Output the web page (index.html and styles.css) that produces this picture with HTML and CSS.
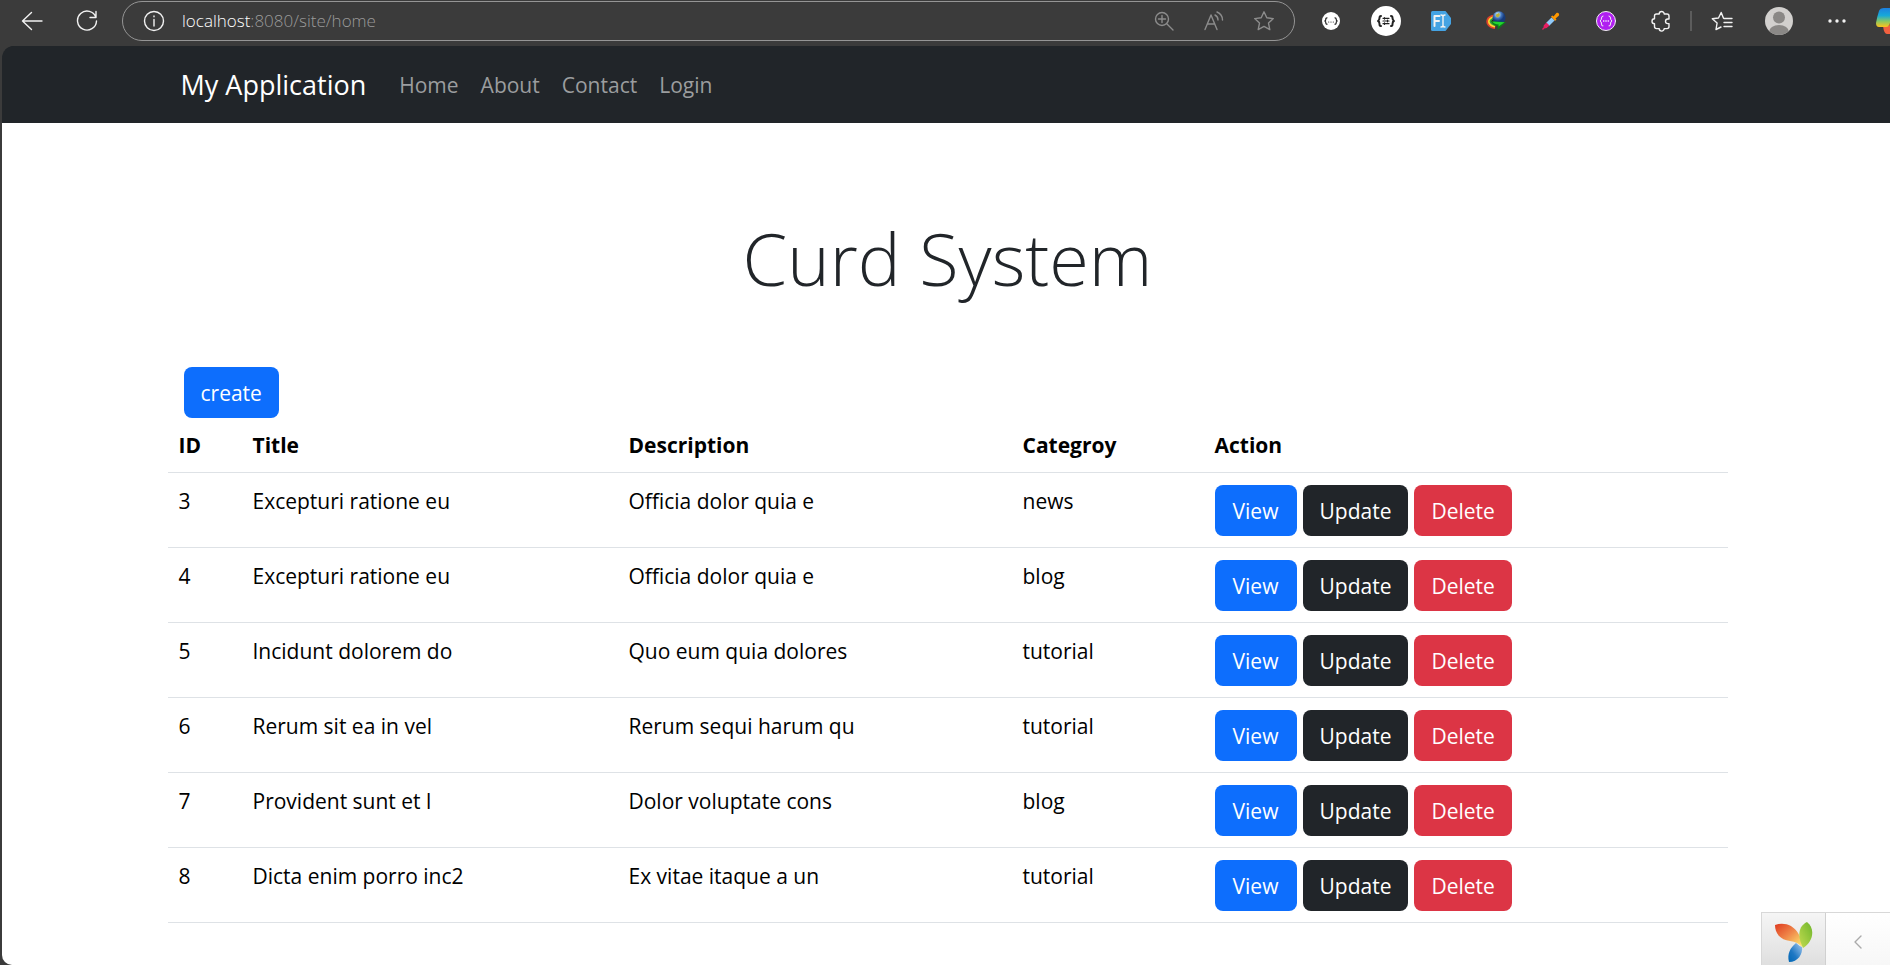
FILE: index.html
```html
<!DOCTYPE html>
<html lang="en">
<head>
<meta charset="utf-8">
<meta name="viewport" content="width=device-width, initial-scale=1">
<title>My Application</title>
<link rel="stylesheet" href="styles.css">
</head>
<body>
<header class="toolbar">
  <button class="tool" aria-label="Back"><svg width="22" height="20" viewBox="0 0 22 20"><path d="M21 10H1.500M10.500 1.500 1.500 10l9 8.500"/></svg></button>
  <button class="tool" aria-label="Refresh"><svg width="22" height="22" viewBox="0 0 22 22"><path d="M20 7.500A9.500 9.500 0 1 0 20.500 11M20 1.500v6h-6"/></svg></button>
  <div class="address">
    <button class="site-info" aria-label="Site information"><svg width="22" height="22" viewBox="0 0 22 22"><circle cx="11" cy="11" r="9.500"/><path d="M11 9.500v6.500M11 6v.8"/></svg></button>
    <div class="url" role="textbox" aria-label="Address"><span class="host">localhost</span>:8080/site/home</div>
    <button class="pill-tool" aria-label="Zoom"><svg width="20" height="20" viewBox="0 0 20 20"><circle cx="8" cy="8" r="6.500"/><path d="M13 13l6 6M8 4.500v7M4.500 8h7"/></svg></button>
    <button class="pill-tool" aria-label="Read aloud"><svg width="20" height="20" viewBox="0 0 20 20"><path d="M1 18.500 7 4 13 18.500M3.300 13h7.500M11 4c2 1 3 2.500 3 5M13 1c3.500 1.500 5.500 4 5.500 8"/></svg></button>
    <button class="pill-tool" aria-label="Add to favorites"><svg width="22" height="22" viewBox="0 0 22 22"><path d="M11 1.800l2.800 6 6.500.8-4.800 4.500 1.300 6.500L11 16.400l-5.800 3.200 1.300-6.500L1.700 8.600l6.500-.8z"/></svg></button>
  </div>
  <button class="tool" aria-label="JSON viewer"><svg width="20" height="20" viewBox="0 0 20 20"><circle class="white" cx="10" cy="10" r="9"/><path class="ink" d="M6 6.800Q4.800 6.800 4.800 8.200T3.800 10Q4.800 10.300 4.800 11.800t1.200 1.400M14 6.800q1.200 0 1.200 1.400t1 1.800q-1 .3-1 1.800T14 13.200"/><g class="dots"><circle cx="7.700" cy="11" r=".6"/><circle cx="10" cy="11" r=".6"/><circle cx="12.300" cy="11" r=".6"/></g></svg></button>
  <button class="tool" aria-label="JSON formatter"><svg width="30" height="30" viewBox="0 0 30 30"><circle class="white" cx="15" cy="15" r="15"/><path class="ink bold" d="M10 10Q8.500 10 8.500 12T7 15q1.500.500 1.500 3t1.500 2M20 10q1.500 0 1.500 2T23 15q-1.500.500-1.500 3T20 20"/><path class="ink" d="M12 12.300h6M12 15h6M12 17.700h6M13.500 11.500v1.600M16.500 14.200v1.600M13.500 16.900v1.600"/></svg></button>
  <button class="tool" aria-label="Form filler"><svg width="20" height="20" viewBox="0 0 20 20"><path fill="#45a3e3" stroke="none" d="M1.500 0h13L20 7v6l-5.500 7h-13Q0 20 0 18.500v-17Q0 0 1.500 0z"/><path class="thick" d="M3.500 15V5H8.500M3.500 10h4.500"/><path d="M10 4q2 0 2 1.500Q12 4 14 4M12 5.500v9M10 16q2 0 2-1.500 0 1.500 2 1.500"/></svg></button>
  <button class="tool" aria-label="Download manager"><svg class="plain" width="20" height="20" viewBox="0 0 20 20"><defs><radialGradient id="globe" cx=".4" cy=".25"><stop offset="0" stop-color="#e8f6ff"/><stop offset=".35" stop-color="#7fb0d8"/><stop offset=".6" stop-color="#3f70b9"/><stop offset="1" stop-color="#173b7a"/></radialGradient></defs><path fill="#e0432c" d="M10 3.500C4 3.500.300 6.500.300 10.500S4 17.500 9 18z"/><path fill="#ffd52e" d="M10 5C5 5 2 7.500 2 10.500S5 16 9 16.500z"/><path fill="#2fa53a" d="M10 6.500C6 6.500 3.700 8.500 3.700 10.500S6 14.500 9 15z"/><path fill="#1d2a18" d="M10 8C7 8 5.500 9 5.500 10.500S8 13 10 13.500z"/><circle cx="13" cy="6.800" r="6.500" fill="url(#globe)"/><path fill="#b6b13d" d="M10 3.500l3-1.500 1 2-2 2.500-2-1z"/><path fill="#0c7d16" d="M5.500 10.500l14.500.500-8.500 8 .2-4C9 15 6.500 13.500 5.500 10.500z"/><path fill="#21d52f" d="M6 10.500l12.500.700-6 4.300.200-2C10 13.500 7.500 12.500 6 10.500z"/></svg></button>
  <button class="tool" aria-label="Color picker"><svg class="plain" width="18" height="18" viewBox="0 0 18 18"><path fill="#ff9800" d="M9 4.500l1.500-1 1 1L14.200 1.200C16 0 18 2 16.800 3.800L13.500 6.500l1 1-1.500 1.500z"/><path fill="#90caf9" d="M9.500 5.500l3 3-5.500 5.500-3-3z"/><path fill="#e91e63" d="M4.500 10.500l3 3-2.800 2.500-2.500.5L1 18 0 17l1.500-1.500.3-2.300z"/></svg></button>
  <button class="tool" aria-label="Code helper"><svg width="20" height="20" viewBox="0 0 20 20"><circle class="thin" cx="10" cy="10" r="9.500" fill="#b01ff0"/><path class="thin" d="M7 5Q5.500 5 5.500 7T4 10q1.500.300 1.500 3T7 15M13 5q1.500 0 1.500 2T16 10q-1.500.300-1.500 3T13 15"/><g fill="#fff" stroke="none"><circle cx="7.700" cy="10" r=".8"/><circle cx="10" cy="10" r=".8"/><circle cx="12.300" cy="10" r=".8"/></g></svg></button>
  <button class="tool" aria-label="Extensions"><svg width="20" height="22" viewBox="0 0 20 22"><path d="M5.500 4h2.700a2.500 2.500 0 0 1 5 0H16q2 0 2 2V9h-1.200a2.300 2.300 0 0 0 0 4.600H18v3q0 2-2 2h-2.800a2.500 2.500 0 0 1-5 0H5.500q-2 0-2-2v-2.800a2.500 2.500 0 0 1 0-5V6Q3.500 4 5.500 4z"/></svg></button>
  <span class="divider"></span>
  <button class="tool" aria-label="Favorites"><svg width="22" height="20" viewBox="0 0 22 20"><path d="M12.500 7.200 10.200 1.500 7.500 7l-6.200.8 4.800 4.200L5 18.500l5-2.500M13 7.500h8M13 11.500h8M13 15.500h8"/></svg></button>
  <button class="tool profile" aria-label="Profile"><svg class="plain" width="28" height="28" viewBox="0 0 28 28"><clipPath id="face"><circle cx="14" cy="14" r="14"/></clipPath><g clip-path="url(#face)"><path fill="#d2d0ce" d="M0 0h28v28H0z"/><circle cx="14" cy="10.500" r="6" fill="#8a8886"/><ellipse cx="14" cy="25" rx="10" ry="7" fill="#8a8886"/></g></svg></button>
  <button class="tool" aria-label="Settings and more"><svg class="plain" width="18" height="4" viewBox="0 0 18 4"><g fill="#f2f2f2"><circle cx="2" cy="2" r="1.700"/><circle cx="9" cy="2" r="1.700"/><circle cx="16" cy="2" r="1.700"/></g></svg></button>
  <button class="tool copilot" aria-label="Copilot"><svg class="plain" width="28" height="26" viewBox="0 0 28 26"><defs><linearGradient id="cop" x2="0" y2="1"><stop offset="0" stop-color="#1c7fe0"/><stop offset=".4" stop-color="#17a9d8"/><stop offset=".7" stop-color="#8ac763"/><stop offset="1" stop-color="#ffc21a"/></linearGradient></defs><path fill="#f2603f" d="M7 18h6l3-9h6v11q-2 6-6 6h-5q-3 0-4-8z"/><path fill="url(#cop)" d="M8 0h11L14 15q-1 4-4 4H3q-3 0-3-4Q1 9 3 3q1-3 5-3z"/></svg></button>
</header>

<div class="page">
  <nav class="navbar">
    <div class="container nav-row">
      <a class="brand" href="#">My Application</a>
      <a class="nav-link" href="#">Home</a>
      <a class="nav-link" href="#">About</a>
      <a class="nav-link" href="#">Contact</a>
      <a class="nav-link" href="#">Login</a>
    </div>
  </nav>

  <main class="container">
    <h1 class="title">Curd System</h1>
    <button class="btn primary create">create</button>
    <table class="posts">
      <thead>
        <tr><th class="col-id">ID</th><th class="col-title">Title</th><th class="col-desc">Description</th><th class="col-cat">Categroy</th><th>Action</th></tr>
      </thead>
      <tbody>
        <tr><td>3</td><td>Excepturi ratione eu</td><td>Officia dolor quia e</td><td>news</td><td><div class="actions"><button class="btn primary">View</button><button class="btn dark">Update</button><button class="btn danger">Delete</button></div></td></tr>
        <tr><td>4</td><td>Excepturi ratione eu</td><td>Officia dolor quia e</td><td>blog</td><td><div class="actions"><button class="btn primary">View</button><button class="btn dark">Update</button><button class="btn danger">Delete</button></div></td></tr>
        <tr><td>5</td><td>Incidunt dolorem do</td><td>Quo eum quia dolores</td><td>tutorial</td><td><div class="actions"><button class="btn primary">View</button><button class="btn dark">Update</button><button class="btn danger">Delete</button></div></td></tr>
        <tr><td>6</td><td>Rerum sit ea in vel</td><td>Rerum sequi harum qu</td><td>tutorial</td><td><div class="actions"><button class="btn primary">View</button><button class="btn dark">Update</button><button class="btn danger">Delete</button></div></td></tr>
        <tr><td>7</td><td>Provident sunt et l</td><td>Dolor voluptate cons</td><td>blog</td><td><div class="actions"><button class="btn primary">View</button><button class="btn dark">Update</button><button class="btn danger">Delete</button></div></td></tr>
        <tr><td>8</td><td>Dicta enim porro inc2</td><td>Ex vitae itaque a un</td><td>tutorial</td><td><div class="actions"><button class="btn primary">View</button><button class="btn dark">Update</button><button class="btn danger">Delete</button></div></td></tr>
      </tbody>
    </table>
  </main>
</div>

<aside class="debug-bar">
  <a class="debug-logo" href="#" aria-label="Yii debugger"><svg class="plain" width="40" height="42" viewBox="0 0 40 42"><defs><linearGradient id="leaf-o" x2="1" y2="1"><stop offset="0" stop-color="#df3a20"/><stop offset=".5" stop-color="#f08a4b"/><stop offset="1" stop-color="#ffee70"/></linearGradient><linearGradient id="leaf-g" x1="1" x2="0" y2="1"><stop offset="0" stop-color="#6fb52c"/><stop offset="1" stop-color="#c3dc50"/></linearGradient><linearGradient id="leaf-b" x1="1" x2="0" y2="1"><stop offset="0" stop-color="#a6c9ee"/><stop offset=".6" stop-color="#1f78c4"/><stop offset="1" stop-color="#0067b5"/></linearGradient></defs><path fill="url(#leaf-b)" d="M22 22q3 3 6 4c1 7-4 15-13 15-2-8 1-14 7-19z"/><path fill="url(#leaf-o)" d="M1 4C10 1 19 4 24 12q4 6 4 14-4-5-12-6C6 19 1 12 1 4z"/><path fill="url(#leaf-g)" d="M33 1c8 6 7 19-4 26-5-10-6-21 4-26z"/></svg></a>
  <button class="debug-toggle" aria-label="Expand debug toolbar"><svg width="8" height="14" viewBox="0 0 8 14"><path d="M7 1 1 7l6 6"/></svg></button>
</aside>
</body>
</html>
```
FILE: styles.css
```css
* {
  box-sizing: border-box;
}

body {
  margin: 0;
  min-height: 100vh;
  display: flex;
  flex-direction: column;
  background: #3b3b3b;
  color: #000;
  font-family: "Open Sans", "Noto Sans", sans-serif;
  font-size: 21px;
  line-height: 32px;
  overflow: hidden;
}

button {
  margin: 0;
  padding: 0;
  border: 0;
  background: none;
  font: inherit;
  color: inherit;
}

a {
  color: inherit;
  text-decoration: none;
}

svg {
  display: block;
  flex: none;
  fill: none;
  stroke: #f2f2f2;
  stroke-width: 1.4;
  stroke-linejoin: round;
  stroke-linecap: round;
}

svg.plain {
  stroke: none;
}

.white {
  fill: #fff;
  stroke: none;
}

.ink {
  stroke: #222;
  stroke-width: 1.2;
}

.dots {
  fill: #222;
  stroke: none;
}

.thin {
  stroke-width: 1;
}

.bold,
.thick {
  stroke-width: 2;
}

/* Browser toolbar */
.toolbar {
  display: flex;
  align-items: center;
  height: 46px;
  padding: 0 0 5px 4px;
  overflow: hidden;
}

.tool {
  flex: none;
  width: 55px;
  height: 40px;
  display: flex;
  align-items: center;
  justify-content: center;
}

.profile {
  width: 60px;
}

.copilot {
  width: 26px;
  padding-left: 12px;
  justify-content: flex-start;
}

.divider {
  width: 2px;
  height: 20px;
  margin: 0 2px;
  background: #5c5c5c;
}

.address {
  flex: 1;
  display: flex;
  align-items: center;
  height: 40px;
  margin: 0 8px;
  padding: 0 5px 0 20px;
  border: 1px solid #959595;
  border-radius: 20px;
}

.site-info {
  margin-right: 17px;
}

.url {
  flex: 1;
  color: #9a9a9a;
  font-size: 17px;
  font-weight: 300;
  line-height: 24px;
}

.host {
  color: #fff;
}

.pill-tool {
  width: 50px;
  display: flex;
  justify-content: center;
}

.pill-tool svg {
  stroke: #8c8c8c;
}

/* Page */
.page {
  flex: 1;
  margin-left: 2px;
  padding-left: 3px;
  background: linear-gradient(#212529 77px, #fff 77px);
  border-radius: 12px 0 0 10px;
  overflow: hidden;
}

.container {
  width: 83%;
  max-width: 1560px;
  margin: 0 auto;
}

.navbar {
  background: #212529;
}

.nav-row {
  display: flex;
  align-items: center;
  height: 77px;
  padding: 0 13px;
}

.brand {
  margin-right: 22px;
  color: #fff;
  font-size: 27px;
}

.nav-link {
  padding: 0 11px;
  color: #9b9d9f;
}

.title {
  margin: 88px 0 62px;
  color: #212529;
  font-size: 72px;
  font-weight: 300;
  line-height: 94px;
  text-align: center;
}

.btn {
  height: 51px;
  min-width: 82px;
  padding: 0 17px;
  border-radius: 8px;
  color: #fff;
}

.primary {
  background: #0d6efd;
}

.dark {
  background: #212529;
}

.danger {
  background: #dc3545;
}

.create {
  display: block;
  margin-left: 16px;
}

.posts {
  width: 100%;
  table-layout: fixed;
  border-collapse: collapse;
}

.posts th,
.posts td {
  padding: 11px;
  border-bottom: 1px solid #dee2e6;
  text-align: left;
  vertical-align: top;
}

.posts td {
  padding-top: 12px;
}

.posts .col-id {
  width: 74px;
}

.posts .col-title {
  width: 376px;
}

.posts .col-desc {
  width: 394px;
}

.posts .col-cat {
  width: 192px;
}

.actions {
  display: flex;
  gap: 6px;
}

/* Debug toolbar */
.debug-bar {
  position: fixed;
  right: 0;
  bottom: 0;
  display: flex;
  height: 53px;
  border: 1px solid #d8d8d8;
  border-width: 1px 0 0 1px;
  background: linear-gradient(#fff, #f7f7f7);
}

.debug-logo {
  display: flex;
  justify-content: center;
  width: 64px;
  padding-top: 8px;
  border-right: 1px solid #d0d0d0;
  background: linear-gradient(#f5f5f5, #dfdfdf);
}

.debug-toggle {
  display: flex;
  align-items: center;
  justify-content: center;
  width: 64px;
  padding-top: 6px;
}

.debug-toggle svg {
  stroke: #aaa;
}
```
